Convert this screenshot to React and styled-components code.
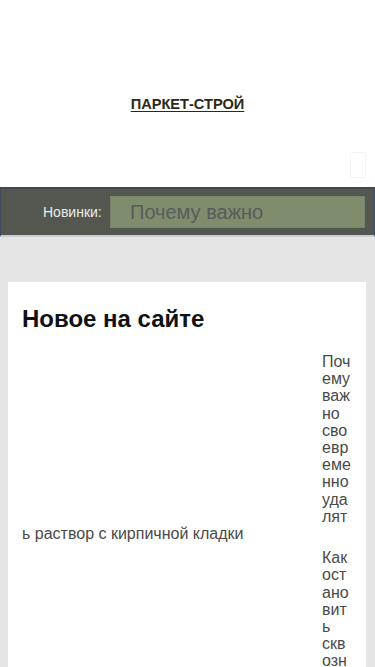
import React from "react";
import styled, { createGlobalStyle } from "styled-components";

const Global = createGlobalStyle`
  html, body { margin: 0; padding: 0; }
  body {
    background: #e5e5e5;
    font-family: "Liberation Sans", Arial, sans-serif;
  }
`;

const Header = styled.header`
  background: #ffffff;
  padding: 96px 0 9px;
  display: flex;
  flex-direction: column;
`;

const Logo = styled.a`
  align-self: center;
  font-size: 14.6px;
  line-height: 16px;
  font-weight: 700;
  color: #2b2a17;
  text-decoration: underline;
  text-underline-offset: 2px;
`;

const MenuRow = styled.div`
  display: flex;
  justify-content: flex-end;
  margin-top: 40px;
  padding-right: 9px;
`;

const MenuButton = styled.button`
  width: 16px;
  height: 26px;
  padding: 0;
  background: #ffffff;
  border: 1px solid #f4f4f4;
  border-radius: 2px;
`;

const NewsBar = styled.div`
  background: #545750;
  border-top: 2px solid #414a53;
  border-left: 1px solid #3c4b5e;
  border-right: 1px solid #3c4b5e;
  border-bottom: 2px solid #c8cdd2;
  height: 46px;
  display: flex;
  align-items: center;
  padding-left: 42px;
  padding-right: 9px;
`;

const NewsLabel = styled.span`
  color: #ececec;
  font-size: 14px;
  width: 67px;
  flex: none;
`;

const NewsTicker = styled.div`
  flex: 1;
  height: 32px;
  box-sizing: border-box;
  background: #808d6d;
  border: 1px solid #76836a;
  color: #565b5c;
  font-size: 20px;
  line-height: 30px;
  padding-left: 19px;
  white-space: nowrap;
  overflow: hidden;
`;

const Main = styled.main`
  padding: 45px 9px 0 8px;
`;

const Card = styled.section`
  background: #ffffff;
  padding: 24px 14px 40px;
  min-height: 400px;
`;

const Title = styled.h2`
  margin: 0 0 21px;
  font-size: 24px;
  line-height: 26px;
  font-weight: 700;
  color: #111111;
`;

const Item = styled.article`
  color: #4a4a4a;
  font-size: 16px;
  line-height: 17.2px;
  margin-bottom: 7px;
  overflow-wrap: break-word;
  &::after { content: ""; display: block; clear: both; }
`;

const Thumb = styled.div`
  float: left;
  width: 300px;
  height: 170px;
`;

const items = [
  "Почему важно своевременно удалять раствор с кирпичной кладки",
  "Как остановить сквозняки в доме: эффективные способы утепления",
];

export default function App() {
  return (
    <>
      <Global />
      <Header>
        <Logo href="#">ПАРКЕТ-СТРОЙ</Logo>
        <MenuRow>
          <MenuButton aria-label="menu" />
        </MenuRow>
      </Header>
      <NewsBar>
        <NewsLabel>Новинки:</NewsLabel>
        <NewsTicker>Почему важно</NewsTicker>
      </NewsBar>
      <Main>
        <Card>
          <Title>Новое на сайте</Title>
          {items.map((t) => (
            <Item key={t}>
              <Thumb />
              {t}
            </Item>
          ))}
        </Card>
      </Main>
    </>
  );
}
